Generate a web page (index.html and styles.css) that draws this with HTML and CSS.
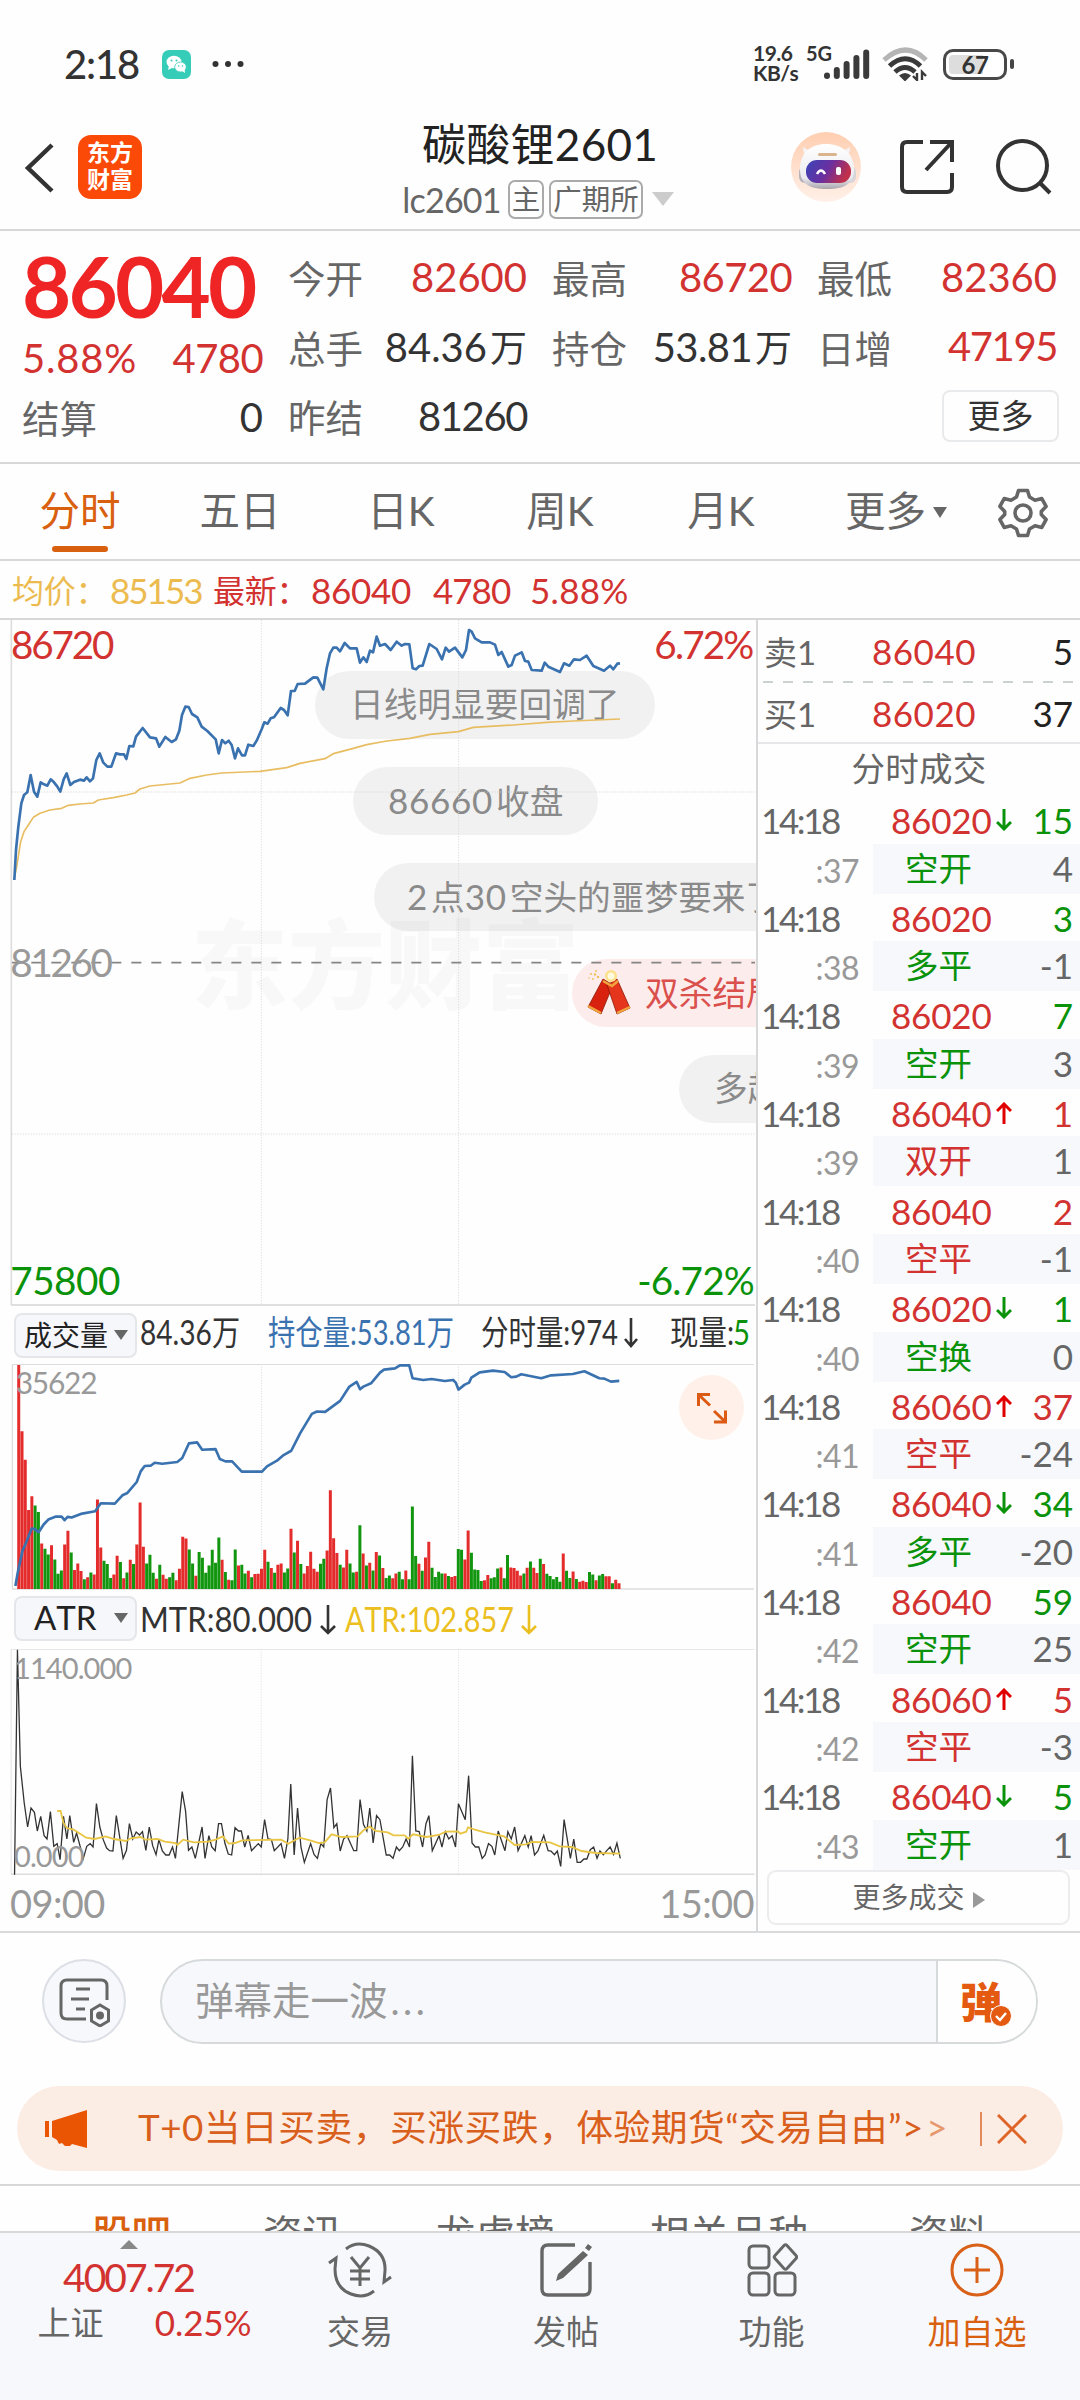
FILE: index.html
```html
<!DOCTYPE html>
<html lang="zh-CN">
<head>
<meta charset="utf-8">
<title>碳酸锂2601</title>
<link rel="stylesheet" href="styles.css">
</head>
<body>
<div class="app">
  <div class="status">
    <span class="clock">2:18</span>
    <svg class="wechat" width="29" height="29" viewBox="0 0 29 29"><rect width="29" height="29" rx="7" fill="#36cdb8"/><ellipse cx="12" cy="12" rx="7.5" ry="6.3" fill="#fff"/><path d="M7 16l-1 4 4-2z" fill="#fff"/><ellipse cx="18.5" cy="17" rx="5.8" ry="5" fill="#fff" stroke="#36cdb8" stroke-width=".8"/><path d="M20 21l3 2-.5-4z" fill="#fff"/><g fill="#36cdb8"><circle cx="9.5" cy="10.500" r="1"/><circle cx="14.500" cy="10.500" r="1"/><circle cx="16.700" cy="16" r=".8"/><circle cx="20.500" cy="16" r=".8"/></g></svg>
    <svg class="dots" width="32" height="8" viewBox="0 0 32 8" fill="#333"><circle cx="3.500" cy="4" r="3"/><circle cx="16" cy="4" r="3"/><circle cx="28.500" cy="4" r="3"/></svg>
    <div class="rate"><span>19.6</span><span>KB/s</span></div>
    <span class="net">5G</span>
    <svg class="signal" width="46" height="30" viewBox="0 0 46 30" stroke="#3a3a3a" stroke-width="6" stroke-linecap="round"><path d="M3 26.500v.5M12.800 21v6M22.600 15v12M32.400 9v18M42.200 3.500v23.500"/></svg>
    <svg class="wifi" width="48" height="34" viewBox="0 0 48 34" fill="none" stroke="#3a3a3a" stroke-width="5"><path d="M2 13q22-20 42 0" stroke="#b5b5b5"/><path d="M7.500 19q16-14.500 31 0"/><path d="M13 25q10-9 20 0"/><path d="M17 28.500q6-5 12 0l-6 6z" fill="#3a3a3a" stroke="none"/><path d="M35 26v7l-4-4M40 33v-8l4 4" stroke-width="2.400"/></svg>
    <div class="battery"><b>67</b></div><i class="nub"></i>
  </div>

  <header class="head">
    <svg class="back" width="30" height="50" viewBox="0 0 30 50" fill="none" stroke="#333" stroke-width="4.500"><path d="M28 2L4 25l24 23"/></svg>
    <div class="logo"><span>东方</span><span>财富</span></div>
    <div class="title">
      <h1>碳酸锂2601</h1>
      <div class="sub"><span class="code">lc2601</span><span class="tag">主</span><span class="tag">广期所</span><i class="tri"></i></div>
    </div>
    <svg class="robot" width="70" height="70" viewBox="0 0 70 70">
      <defs><linearGradient id="peach" x2="0" y2="1"><stop stop-color="#ffceb0"/><stop offset="1" stop-color="#fff0e8"/></linearGradient><linearGradient id="visor" x2="1" y2=".3"><stop stop-color="#3a45b8"/><stop offset=".55" stop-color="#6a2fa0"/><stop offset="1" stop-color="#c0304c"/></linearGradient><linearGradient id="shell" x2="0" y2="1"><stop stop-color="#fff"/><stop offset=".75" stop-color="#ececf0"/><stop offset="1" stop-color="#a9a4ac"/></linearGradient></defs>
      <circle cx="35" cy="35" r="35" fill="url(#peach)"/>
      <rect x="8" y="34" width="12" height="17" rx="6" fill="#b6b2bb"/><rect x="53" y="34" width="12" height="17" rx="6" fill="#d7d4da"/>
      <path d="M12 15q0 9 6 12l4-6zM59 15q0 9-6 12l-4-6z" fill="#f4f3f5"/>
      <path d="M35 12c16 0 28 10 28 25S53 57 36 57 9 52 9 37s10-25 26-25z" fill="url(#shell)"/>
      <rect x="27" y="21" width="19" height="3" rx="1.500" fill="#d9b48c"/>
      <rect x="15" y="28" width="45" height="23" rx="11" fill="url(#visor)"/>
      <path d="M26 42q4-7 8 0" fill="none" stroke="#fff" stroke-width="2.500"/><rect x="45" y="35" width="5" height="8" rx="2" fill="#fff"/>
    </svg>
    <svg class="share" width="54" height="56" viewBox="0 0 54 56" fill="none" stroke="#333" stroke-width="4"><path d="M23 3H7Q2 3 2 8v40q0 5 5 5h40q5 0 5-5V34M30 3h22v20M52 3L26 31"/></svg>
    <svg class="search" width="56" height="56" viewBox="0 0 56 56" fill="none" stroke="#333" stroke-width="4"><circle cx="26.500" cy="26.500" r="24.500"/><path d="M43 43l11 11"/></svg>
  </header>

  <section class="quote">
    <div class="qmain">
      <div class="last">86040</div>
      <div class="pair red"><span>5.88%</span><span class="tight">4780</span></div>
      <div class="pair settle"><em>结算</em><span>0</span></div>
    </div>
    <div class="qgrid">
      <div class="pair"><em>今开</em><span class="red">82600</span></div>
      <div class="pair"><em>最高</em><span class="red tight">86720</span></div>
      <div class="pair"><em>最低</em><span class="red">82360</span></div>
      <div class="pair"><em>总手</em><span>84.36<u>万</u></span></div>
      <div class="pair"><em>持仓</em><span class="tight">53.81<u>万</u></span></div>
      <div class="pair"><em>日增</em><span class="red tighter">47195</span></div>
      <div class="pair"><em>昨结</em><span class="tighter">81260</span></div>
      <div></div>
      <div class="morecell"><span class="morebtn">更多</span></div>
    </div>
  </section>

  <nav class="tabs">
    <span class="on">分时</span><span>五日</span><span>日K</span><span>周K</span><span>月K</span><span class="tmore">更多<i></i></span>
    <svg width="50" height="50" viewBox="0 0 50 50" fill="none" stroke="#666" stroke-width="3.600" stroke-linejoin="round"><path d="M20.500 2.500h9l2 6.500 5.500 3.200 6.800-1.600 4.300 7.800-4.800 5v3.200l4.800 5-4.300 7.800-6.800-1.600-5.500 3.200-2 6.500h-9l-2-6.500-5.500-3.200-6.800 1.600-4.300-7.800 4.800-5v-3.200l-4.800-5 4.300-7.800 6.800 1.600L18.500 9z"/><circle cx="25" cy="25" r="8"/></svg>
  </nav>

  <div class="avg"><span class="gold">均价：</span><span class="gold a1">85153</span><span class="a2">最新：</span><span class="a3">86040</span><span class="a4">4780</span><span class="a5">5.88%</span></div>

  <main class="body">
    <div class="left">
      <div class="price">
        <div class="mark">东方财富</div>
        <div class="pill p1">日线明显要回调了</div>
        <div class="pill p2"><b>86660</b>收盘</div>
        <div class="pill p3"><b>2</b>点<b>30</b>空头的噩梦要来了</div>
        <div class="pill hot p4"><svg width="46" height="48" viewBox="0 0 46 48"><g fill="#f0c05a"><circle cx="5" cy="5" r="1"/><circle cx="10" cy="2" r=".9"/><circle cx="12" cy="8" r="1.200"/><circle cx="7" cy="10" r=".9"/><circle cx="3" cy="9" r=".8"/><circle cx="9" cy="5.500" r="1.200"/></g><g stroke="#8a1a08" stroke-width=".8"><path d="M17 10l10 6-12 29-13-7z" fill="#d8210f"/><path d="M31 10l-10 6 10 29 13-6z" fill="#e5351c"/></g><path d="M2 37l13 7M44 38l-13 6M17 12l9 5 6-5" stroke="#f0a63c" stroke-width="2.400" fill="none"/><circle cx="25" cy="7" r="6" fill="#ffe08a"/><circle cx="25" cy="7" r="3.500" fill="#fffbe0"/></svg>双杀结局</div>
        <div class="pill p5">多起来</div>
        <svg class="plot" viewBox="0 30 2268 2058" fill="none">
          <g stroke="#d5d5d5" stroke-width="3" stroke-dasharray="3 5"><path d="M784 30V2085M1376 30V2085M36 546H2265M36 1572H2265"/></g>
          <path d="M34 30V2085" stroke="#ddd" stroke-width="5"/><path d="M34 2085H2265" stroke="#d4d4d4" stroke-width="5"/>
          <path d="M36 1058H2265" stroke="#858585" stroke-width="5" stroke-dasharray="30 30" stroke-dashoffset="2"/>
          <polyline stroke="#e8bd62" stroke-width="5" stroke-linejoin="round" points="43,805 50,770 62,695 72,665 85,645 100,622 120,610 150,600 185,595 205,586 240,582 280,579 295,570 340,563 380,555 405,549 420,537 450,528 540,519 570,505 620,495 665,489 780,484 860,473 900,460 975,446 1000,431 1060,415 1100,404 1160,393 1230,385 1290,373 1375,365 1420,352 1540,345 1640,337 1720,333 1860,327"/>
          <polyline stroke="#3a72b0" stroke-width="8" stroke-linejoin="round" points="43,810 48,720 55,650 64,580 72,555 82,547 92,495 102,545 112,560 122,517 132,523 142,527 152,508 162,517 172,530 181,545 191,508 200,490 211,525 222,516 240,509 252,512 260,502 270,514 279,505 289,450 299,430 310,458 322,470 334,470 348,430 360,433 372,433 379,447 388,408 400,409 408,380 428,354 450,382 468,385 478,410 496,381 515,396 528,388 538,362 546,315 556,290 566,291 576,312 592,322 605,350 622,363 647,388 656,430 666,390 676,400 686,392 695,405 705,445 714,415 726,436 735,436 745,404 760,408 770,392 785,358 793,337 803,341 812,325 822,322 842,294 852,300 863,316 873,243 884,243 893,222 915,221 940,202 952,203 970,238 980,175 990,130 1000,113 1010,113 1020,124 1034,99 1050,115 1070,115 1080,158 1090,142 1100,156 1110,122 1119,127 1130,80 1140,107 1155,102 1172,120 1190,95 1205,107 1215,102 1228,103 1238,175 1248,178 1258,168 1268,167 1288,102 1310,117 1326,148 1337,113 1347,125 1365,113 1387,142 1398,120 1407,60 1415,65 1425,85 1445,97 1470,97 1485,104 1495,135 1505,126 1525,170 1535,165 1545,137 1565,127 1575,153 1585,155 1595,180 1625,182 1634,158 1645,170 1680,186 1692,160 1708,167 1722,148 1740,150 1760,137 1780,168 1812,182 1830,167 1840,178 1852,161 1860,160"/>
          <g class="lab">
            <text x="33" y="148" fill="#d23230" textLength="310">86720</text>
            <text x="1963" y="148" fill="#d23230" textLength="300">6.72%</text>
            <text x="31" y="1102" fill="#999" textLength="308">81260</text>
            <text x="31" y="2056" fill="#0b920b" textLength="330">75800</text>
            <text x="1912" y="2056" fill="#0b920b" textLength="352">-6.72%</text>
          </g>
        </svg>
      </div>
      <div class="ind ind1">
        <span class="pick">成交量<i></i></span>
        <svg class="indtext" width="619" height="58" viewBox="0 0 619 58">
          <text x="3" y="40" textLength="100" lengthAdjust="spacingAndGlyphs">84.36万</text>
          <text x="131" y="40" fill="#3a72b0" textLength="186" lengthAdjust="spacingAndGlyphs">持仓量:53.81万</text>
          <text x="344" y="40" textLength="137" lengthAdjust="spacingAndGlyphs">分时量:974</text>
          <path d="M494 13v27M488 34l6 7 6-7" fill="none" stroke="#333" stroke-width="2.600"/>
          <text x="533" y="40" textLength="64" lengthAdjust="spacingAndGlyphs">现量:</text><text x="596" y="40" fill="#0b920b" textLength="17" lengthAdjust="spacingAndGlyphs">5</text>
        </svg>
      </div>
      <div class="vol">
        <svg class="plot" viewBox="0 222 2268 680" fill="none">
          <g stroke="#d5d5d5" stroke-width="3" stroke-dasharray="3 5"><path d="M784 222V899M1376 222V899"/></g>
          <path d="M34 223H2265M34 899H2265M34 223V899" stroke="#ddd" stroke-width="4"/>
          <g id="bars"></g>
          <text class="slab" x="44" y="312" textLength="246">35622</text>
          <polyline stroke="#3a72b0" stroke-width="8" stroke-linejoin="round" points="43,890 50,850 64,785 75,760 92,717 100,718 113,728 128,705 142,690 165,681 182,681 191,692 200,682 212,684 240,673 283,665 300,641 342,642 365,617 380,610 408,577 420,545 432,529 450,528 462,519 485,522 530,517 545,505 565,461 590,458 605,480 645,478 658,508 675,515 695,515 724,546 785,546 800,530 830,513 850,496 873,483 900,430 935,372 950,365 975,366 1020,333 1048,290 1070,276 1080,298 1090,290 1113,280 1140,248 1152,239 1185,235 1200,226 1228,226 1238,265 1270,270 1295,267 1335,273 1360,270 1368,278 1376,299 1395,284 1408,278 1415,263 1440,247 1480,242 1515,246 1535,262 1550,260 1565,253 1625,265 1655,256 1720,252 1755,244 1800,265 1815,266 1835,275 1860,273"/>
        </svg>
        <div class="expand"><svg width="32" height="32" viewBox="0 0 32 32" fill="none" stroke="#dd5a14" stroke-width="3"><path d="M14 2.500H2.500V14M3 3l11 10.500M18 30h11.500V18.500M29 29.500L18 19"/></svg></div>
      </div>
      <div class="ind">
        <span class="pick atr">ATR<i></i></span>
        <svg class="indtext" width="619" height="58" viewBox="0 0 619 58">
          <text x="3" y="42" textLength="172" lengthAdjust="spacingAndGlyphs">MTR:80.000</text>
          <path d="M191 15v27M184 36l7 7 7-7" fill="none" stroke="#333" stroke-width="2.600"/>
          <g fill="#ecbf20"><text x="208" y="42" textLength="169" lengthAdjust="spacingAndGlyphs">ATR:102.857</text></g>
          <path d="M392 15v27M385 36l7 7 7-7" fill="none" stroke="#ecbf20" stroke-width="2.600"/>
        </svg>
      </div>
      <div class="atrbox">
        <svg class="plot" viewBox="0 178 1560 678" preserveAspectRatio="none" fill="none">
          <g stroke="#d5d5d5" stroke-width="2" stroke-dasharray="3 5"><path d="M539 178V855M946 178V855"/></g>
          <path d="M23 179V854M23 179H1557" stroke="#ddd" stroke-width="2"/><path d="M23 854H1557" stroke="#ddd" stroke-width="5"/>
          <polyline stroke="#333" stroke-width="1.300" vector-effect="non-scaling-stroke" points="30,855 36,180 42,530 50,640 57,712 64,655 71,668 77,724 84,680 91,738 97,748 104,666 111,770 118,762 124,810 131,680 138,748 144,678 152,758 158,730 172,806 179,770 186,762 192,772 199,642 206,712 213,750 220,775 226,783 233,784 240,678 254,806 261,782 267,702 274,748 281,727 288,736 294,726 301,782 308,712 315,768 322,795 328,750 335,784 342,796 349,796 356,772 362,806 376,606 383,665 389,782 396,772 403,806 417,712 423,806 431,738 437,772 444,783 451,702 457,702 464,760 471,793 478,796 485,714 492,724 498,724 505,772 512,737 519,783 533,762 539,772 546,690 553,748 560,750 566,783 580,762 587,806 594,748 600,583 607,796 614,655 621,772 628,818 641,762 648,794 655,806 662,762 668,772 675,630 682,595 689,714 695,702 702,784 709,748 716,738 730,783 736,783 743,630 750,704 757,724 763,655 770,760 777,678 784,690 797,796 804,796 811,806 818,772 824,783 831,772 838,748 845,772 851,498 858,724 865,726 872,772 879,702 885,678 892,783 906,738 912,772 919,726 926,748 933,738 940,772 946,642 960,690 967,558 974,760 981,772 988,772 995,806 1001,796 1008,762 1015,770 1021,796 1028,724 1042,783 1048,726 1055,748 1062,712 1069,783 1083,738 1090,772 1096,738 1103,796 1110,784 1122,737 1131,783 1137,784 1144,795 1150,784 1157,830 1164,690 1177,806 1184,748 1191,818 1198,818 1205,808 1211,808 1218,780 1225,772 1232,806 1238,784 1245,795 1252,783 1259,772 1266,794 1273,760 1280,806"/>
          <polyline stroke="#e9c544" stroke-width="1.800" vector-effect="non-scaling-stroke" points="118,664 125,664 131,700 138,715 152,720 178,744 195,748 218,740 235,748 260,754 270,746 290,742 300,750 325,748 340,756 362,760 366,766 378,750 400,758 430,756 445,750 460,740 472,762 485,760 500,752 580,750 595,762 605,754 618,744 640,752 658,760 670,758 684,734 705,742 738,740 750,722 763,711 775,724 800,728 812,737 835,737 843,747 852,734 880,742 905,736 920,726 945,725 950,732 962,726 966,713 980,720 1000,728 1040,740 1062,766 1085,764 1098,757 1135,758 1155,770 1180,772 1200,784 1230,790 1280,792"/>
        </svg>
        <span class="atrmax">1140.000</span><span class="atrmin">0.000</span>
      </div>
      <div class="times"><span>09:00</span><span>15:00</span></div>
    </div>

    <aside class="right">
      <div class="book sell"><em>卖1</em><b>86040</b><span>5</span></div>
      <svg class="dash" width="310" height="2" viewBox="0 0 310 2"><path d="M0 1h310" stroke="#ccd2d2" stroke-width="2" stroke-dasharray="10 10"/></svg>
      <div class="book buy"><em>买1</em><b>86020</b><span>37</span></div>
      <h2>分时成交</h2>
      <div class="ticks" id="ticks"></div>
      <div class="allticks">更多成交<i></i></div>
    </aside>
  </main>

  <div class="compose">
    <div class="setting"><svg width="52" height="52" viewBox="0 0 52 52" fill="none" stroke="#666" stroke-width="3"><path d="M28 44H9q-6 0-6-6V11q0-6 6-6h34q6 0 6 6v14"/><path d="M18 14h14M13 24h18M18 34h9"/><path d="M42 30l8.500 5v11L42 51l-8.500-5V35z" fill="#f6f8fb"/><circle cx="42" cy="40.500" r="2.500" fill="#666"/></svg></div>
    <div class="input"><span class="hint">弹幕走一波<b>...</b></span><div class="dan"><span>弹</span><svg width="22" height="22" viewBox="-1 -1 22 22"><circle cx="10" cy="10" r="10.500" fill="#e45a10" stroke="#fefefe"/><path d="M5 10l4 4 6-7" fill="none" stroke="#fff" stroke-width="2.400"/></svg></div></div>
  </div>

  <div class="banner">
    <svg width="44" height="38" viewBox="0 0 44 38" fill="#ea5504"><path d="M1 11h4v16H1zM8 11L43 0v38l-15-4-2 2h-5l-3-3-3 1-2-4-5-3z"/></svg>
    <span class="btext">T+0当日买卖，买涨买跌，体验期货“交易自由”<b>&gt;</b><b class="fade">&gt;</b></span>
    <i class="bar"></i>
    <svg class="x" width="30" height="30" viewBox="0 0 30 30" stroke="#df6428" stroke-width="3"><path d="M1 1l28 28M29 1L1 29"/></svg>
  </div>

  <div class="feed"><span class="f1">股吧</span><span class="f2">资讯</span><span class="f3">龙虎榜</span><span class="f4">相关品种</span><span class="f5">资料</span></div>

  <footer class="nav">
    <div class="index"><i></i><span class="pt">4007.72</span><div><em>上证</em><span>0.25%</span></div></div>
    <div class="item"><svg width="64" height="56" viewBox="0 0 64 56" fill="none" stroke="#666" stroke-width="3"><path d="M18 7q10-8 23-3 17 7 16 25l-1 11 7-5M46 49q-10 8-23 3Q7 46 7 27l1-11-7 5"/><path d="M23 15l9 11 9-11M32 26v18M22 29h20M22 37h20"/></svg>交易</div>
    <div class="item"><svg width="54" height="56" viewBox="0 0 54 56" fill="none" stroke="#666" stroke-width="3.400"><path d="M36 3H9Q3 3 3 9v38q0 6 6 6h36q6 0 6-6V20"/><path d="M44 9l5 4-25 23-7 3 2-7zM46 6l3-4 4 3-3 4z" fill="#666" stroke="none"/></svg>发帖</div>
    <div class="item"><svg width="52" height="54" viewBox="0 0 52 54" fill="none" stroke="#666" stroke-width="3"><rect x="3" y="3" width="20" height="22" rx="4"/><rect x="3" y="30" width="20" height="22" rx="4"/><rect x="29" y="30" width="20" height="22" rx="4"/><path d="M38 2.500q1.500-1.500 3 0l9 10q1.500 1.500 0 3l-9 10q-1.500 1.500-3 0l-9-10q-1.500-1.500 0-3z"/></svg>功能</div>
    <div class="item add"><svg width="54" height="54" viewBox="0 0 54 54" fill="none" stroke="#d96018" stroke-width="3"><circle cx="27" cy="27" r="25"/><path d="M27 14v26M14 27h26"/></svg>加自选</div>
  </footer>
</div>
<script src="app.js"></script>
</body>
</html>
```
FILE: styles.css
```css
* { box-sizing: border-box; }
body { margin: 0; background: #fefefe; color: #333; font-family: Lato, "Noto Sans CJK SC", sans-serif; font-kerning: none; }
em, i, u { font-style: normal; text-decoration: none; }
h1, h2 { margin: 0; font-weight: 400; }
.app { width: 1080px; height: 2400px; overflow: hidden; display: flex; flex-direction: column; }
.app > * { flex: none; }
.red { color: #d23230; }

.status { height: 98px; padding: 30px 0 0 64px; display: flex; align-items: center; }
.clock { width: 98px; font-size: 40px; line-height: 68px; letter-spacing: -1.2px; font-weight: 500; }
.dots { margin-left: 21px; }
.rate { margin-left: 509px; width: 53px; display: flex; flex-direction: column; font-size: 21px; line-height: 20px; font-weight: 700; letter-spacing: -.5px; margin-top: -2px; }
.net { width: 30px; font-size: 20px; font-weight: 700; line-height: 20px; margin-bottom: 22px; letter-spacing: 0; }
.signal { margin-left: -12px; }
.wifi { margin-left: 12px; }
.battery { margin-left: 13px; width: 64px; height: 31px; border: 3px solid #484848; border-radius: 10px; background: linear-gradient(90deg, #ddd 64%, #fff 64%); background-clip: content-box; padding: 3px; display: flex; align-items: center; justify-content: center; }
.battery b { font-size: 24px; letter-spacing: -.5px; }
.nub { width: 4px; height: 10px; margin-left: 3px; border-radius: 2px; background: #444; }

.head { height: 133px; border-bottom: 2px solid #d8d8d8; display: flex; align-items: flex-start; padding-left: 24px; }
.back { margin-top: 45px; }
.logo { margin: 37px 0 0 24px; width: 64px; height: 64px; border-radius: 13px; background: #fb4a08; color: #fff; font-size: 23px; line-height: 27px; font-weight: 700; padding-top: 4px; display: flex; flex-direction: column; align-items: center; }
.title { width: 398px; margin-left: 199px; display: flex; flex-direction: column; align-items: center; }
.title h1 { height: 73px; line-height: 92px; font-size: 44px; letter-spacing: .3px; color: #222; }
.sub { display: flex; align-items: center; height: 56px; color: #666; margin-left: -4px; }
.code { font-size: 34px; letter-spacing: -.8px; margin-right: 7px; }
.tag { border: 2px solid #aaa; border-radius: 7px; height: 39px; line-height: 35px; font-size: 28.500px; padding: 0 2px; margin-right: 5px; }
.tri { border: 11px solid transparent; border-top: 14px solid #ccc; border-bottom: 0; margin-left: 4px; }
.robot { margin: 34px 0 0 52px; }
.share { margin: 41px 0 0 39px; }
.search { margin: 41px 0 0 42px; }

.quote { height: 233px; border-bottom: 2px solid #d8d8d8; display: flex; padding: 0 23px 0 22px; }
.qmain { width: 241px; }
.last { height: 92px; line-height: 109px; font-size: 85px; font-weight: 700; color: #ef2525; letter-spacing: -2.8px; }
.pair { display: flex; justify-content: space-between; align-items: center; height: 69.500px; font-size: 40px; white-space: nowrap; }
.pair em { font-size: 37.500px; color: #666; }
.pair u { font-size: 37px; margin-left: 3px; letter-spacing: 0; }
.tight { letter-spacing: -.6px; }
.tighter { letter-spacing: -1.4px; }
.qmain .red { height: 69px; }
.qmain .settle { height: 49px; }
.qmain .red span:first-child { letter-spacing: .8px; }
.qgrid { margin: 11px 0 0 25px; display: grid; grid-template-columns: 239px 240px 240px; column-gap: 25px; align-content: start; }
.morecell { display: flex; justify-content: flex-end; align-items: center; margin-right: -2px; }
.morebtn { width: 117px; height: 52px; border: 2px solid #e8eaec; border-radius: 8px; text-align: center; line-height: 46px; font-size: 33px; }

.tabs { height: 97px; border-bottom: 2px solid #d8d8d8; display: grid; grid-template-columns: 160px 160px 162px 156px 166px 195px 50px; font-size: 40.500px; line-height: 94px; color: #666; text-align: center; }
.tabs .on { color: #d9600f; position: relative; }
.tabs .on::after { content: ""; position: absolute; left: 52px; bottom: 7px; width: 56px; height: 6px; border-radius: 3px; background: #d9600f; }
.tmore { padding-right: 11px; }
.tmore i { display: inline-block; vertical-align: 8px; border: 7px solid transparent; border-top: 11px solid #666; border-bottom: 0; margin-left: 7px; }
.tabs svg { margin-top: 24px; margin-left: -1px; }

.avg { height: 59px; line-height: 59px; border-bottom: 2px solid #d8d8d8; display: flex; padding-left: 12px; font-size: 35px; color: #d23230; white-space: nowrap; letter-spacing: -.3px; }
.avg .gold { color: #ecbb50; }
.gold:first-child, .a2 { font-size: 32px; width: 98px; }
.avg .a1 { width: 103px; letter-spacing: -2px; }
.a3 { width: 122px; }
.a4 { width: 97px; letter-spacing: -1px; }
.a5 { letter-spacing: .3px; }

.body { height: 1313px; display: flex; border-bottom: 2px solid #d8dadb; }
.left { width: 758px; border-right: 2px solid #d6d8d9; overflow: hidden; }
.price { position: relative; height: 686px; overflow: hidden; }
.plot { position: absolute; left: 0; top: 0; width: 756px; height: 100%; }
.mark { position: absolute; left: 191px; top: 274px; font-size: 97px; line-height: 140px; font-weight: 900; color: rgba(0,0,0,.025); }
.pill { position: absolute; height: 68px; border-radius: 34px; background: rgba(0,0,0,.05); color: #8a8a8a; font-size: 33.700px; line-height: 67px; padding: 0 35px; white-space: nowrap; }
.pill b { font-weight: 400; font-size: 35px; letter-spacing: .7px; margin-right: 3px; }
.p1 { left: 315px; top: 51px; }
.p2 { left: 353px; top: 147px; width: 245px; }
.p3 { left: 374px; top: 243px; padding-left: 33px; }
.p4 { left: 572px; top: 339px; }
.p5 { left: 679px; top: 435px; }
.hot { background: #fdecec; color: #d9504c; padding-left: 14px; display: flex; align-items: center; gap: 13px; }
.lab text { font-size: 116px; }
.slab { font-size: 90px; fill: #999; }
.ind { height: 59px; display: flex; align-items: center; padding-left: 14px; }
.ind1 { height: 58px; }
.pick { width: 123px; height: 45px; border: 2px solid #e4e6ea; border-radius: 8px; background: #f6f7fa; display: flex; align-items: center; justify-content: space-between; padding: 0 7px 3px 8px; font-size: 28px; color: #222; }
.pick i { border: 7px solid transparent; border-top: 10px solid #666; border-bottom: 0; margin-top: 2px; }
.atr { font-size: 33px; padding-left: 18px; margin-top: -2px; }
.indtext text { font-size: 34px; }
.indtext { fill: #333; margin-top: -2px; }
.vol, .atrbox { position: relative; height: 226px; }
.expand { position: absolute; left: 679px; top: 11px; width: 65px; height: 65px; border-radius: 50%; background: #fff1e9; display: flex; align-items: center; justify-content: center; }
.atrmax, .atrmin { position: absolute; left: 14px; font-size: 29px; line-height: 36px; color: #999; letter-spacing: -.9px; }
.atrmax { top: 1px; }
.atrmin { bottom: 1px; }
.times { height: 56px; padding: 0 2px 0 10px; line-height: 57px; display: flex; justify-content: space-between; font-size: 38px; color: #999; letter-spacing: -.6px; }

.right { flex: 1; position: relative; }
.book { height: 61px; display: flex; align-items: center; padding: 0 7px 0 6px; font-size: 35px; color: #222; }
.book em { width: 108px; font-size: 33px; color: #666; }
.book b { font-weight: 400; color: #d23230; letter-spacing: .5px; }
.book span { margin-left: auto; }
.buy { border-bottom: 2px solid #e6e6e8; }
.dash { display: block; margin-left: 5px; }
.right h2 { height: 52px; line-height: 49px; font-size: 33.500px; color: #666; text-align: center; letter-spacing: .3px; }
.tick { height: 97.600px; font-size: 35px; }
.t1 { height: 47.600px; padding-top: 1px; display: flex; align-items: center; padding-right: 7px; padding-left: 3px; }
.t1 em { width: 130px; color: #666; letter-spacing: -2.400px; }
.t1 b { font-weight: 400; color: #d23230; letter-spacing: -.2px; }
.t1 svg { margin-left: 4px; }
.t1 span, .t2 span { margin-left: auto; }
.t2 { height: 50px; display: flex; line-height: 49px; }
.t2 em { width: 101px; text-align: right; color: #999; font-size: 32px; line-height: 54px; letter-spacing: -.5px; }
.t2 div { width: 207px; margin-left: 14px; padding: 0 7px 0 32px; background: #f6f8fb; display: flex; }
.t2 b { font-weight: 400; font-size: 33.500px; }
.t2 span { color: #666; }
.t1 .up, .t2 .up { color: #d23230; }
.t1 .down, .t2 .down { color: #0b920b; }
.allticks { margin: 0 10px 0 9px; height: 55px; border: 2px solid #ececee; border-radius: 9px; text-align: center; line-height: 51px; font-size: 28px; color: #666; }
.allticks i { display: inline-block; border: 8px solid transparent; border-left: 12px solid #999; border-right: 0; margin-left: 8px; }

.compose { height: 153px; padding: 26px 0 0 42px; display: flex; }
.setting { width: 84px; height: 84px; border-radius: 50%; border: 2px solid #dcdfe6; background: #f6f8fb; display: flex; align-items: center; justify-content: center; }
.input { margin-left: 34px; width: 878px; height: 85px; border: 2px solid #d6dada; border-radius: 43px; overflow: hidden; background: #f6f8fb; display: flex; }
.hint { flex: 1; padding-left: 33px; line-height: 79px; font-size: 38.500px; color: #999; }
.hint b { font-weight: 400; letter-spacing: 3.500px; margin-left: 3px; }
.dan { width: 100px; border-left: 2px solid #d6dada; background: #fefefe; display: flex; align-items: center; padding-left: 22px; }
.dan span { font-size: 42px; line-height: 78px; font-weight: 900; color: #e45a10; }
.dan svg { flex: none; margin: 28px 0 0 -12px; position: relative; }

.banner { margin: 0 17px; height: 85px; border-radius: 43px; background: #fcede4; display: flex; align-items: center; padding-left: 27px; color: #d95f1c; }
.btext { margin-left: 50px; width: 842px; font-size: 36.800px; letter-spacing: .45px; line-height: 77px; padding-bottom: 3px; white-space: nowrap; }
.btext b { font-weight: 400; letter-spacing: 3px; }
.fade { opacity: .6; }
.bar { width: 2px; height: 34px; background: #e28a5c; }
.x { margin-left: 15px; }

.feed { margin-top: 13px; height: 47px; overflow: hidden; border-top: 2px solid #d8d8d8; display: flex; padding-left: 92px; font-size: 39.500px; line-height: 96px; color: #666; white-space: nowrap; }
.f1 { width: 171px; color: #d9600f; font-weight: 500; }
.f2 { width: 173px; }
.f3 { width: 214px; }
.f4 { width: 259px; }
.nav { flex: 1; border-top: 2px solid #d8d8d8; background: #f6f8fb; display: grid; grid-template-columns: 257px 206px 206px 205px 206px; }
.index { display: flex; flex-direction: column; align-items: center; color: #d23230; }
.index i { border: 9px solid transparent; border-bottom: 9px solid #888; border-top: 0; margin-top: 7px; }
.pt { font-size: 39px; line-height: 56px; letter-spacing: -2px; }
.index div { width: 214px; display: flex; justify-content: space-between; margin-left: 32px; line-height: 34px; font-size: 35px; letter-spacing: -.1px; }
.index em { font-size: 33px; color: #666; }
.item { display: flex; flex-direction: column; align-items: center; font-size: 33px; line-height: 46px; color: #666; padding-top: 9px; }
.item svg { height: 56px; margin-bottom: 10px; flex: none; }
.add { color: #d9600f; }
```
FILE: app.js
```js
// Minute volume bars: direction followed by the bar's top in chart units.
const volume = 'r225 r424 r510 r661 r620 g648 g667 r762 g778 g795 r767 g810 g853 g843 r765 r724 g789 r842 r822 r845 g870 r864 g849 r855 r630 r774 g814 g824 g866 r855 r799 g818 r867 g849 r811 g824 r765 r639 r772 g822 g796 g850 r868 g826 r856 r868 g864 g850 r873 r838 r742 r747 g780 g822 r859 g788 g805 g850 g828 g781 g820 g744 r811 g848 r871 g873 g780 r828 g826 g852 r844 g864 r854 r853 r838 r781 g817 r836 g850 r826 r822 g849 g837 r718 g789 r754 g824 r852 r830 r787 r838 r847 g823 g808 r783 r602 r746 r791 g826 r834 r781 g822 g849 r847 g707 r792 g828 r820 g843 r788 g798 r836 g866 g858 r867 r852 g847 g870 r843 g870 g651 g800 r823 g844 r804 r757 g835 g863 g847 g852 r852 g860 r863 r860 g779 g781 r810 r723 g790 g840 g842 g875 r873 r857 g867 g864 g837 r834 g867 g797 r834 r836 r844 r858 g852 r835 g816 r835 r851 g808 r824 g853 g860 g870 g863 g877 r792 g844 g866 r846 g869 r877 r874 r878 g848 g855 r873 g858 g854 r861 r861 g882 r871 r882'.split(' ');
const paths = { r: '', g: '' };
volume.forEach((v, i) => { paths[v[0]] += `M${(53 + 9.87 * i).toFixed(1)} 899V${v.slice(1)}`; });
document.getElementById('bars').innerHTML =
  `<path d="${paths.r}" stroke="#e42c2c" stroke-width="9"/><path d="${paths.g}" stroke="#12950f" stroke-width="9"/>`;

// price, arrow, volume, side colour, seconds, kind, kind colour, open-interest change
const ticks = [
  [86020, 'down', 15, 'down', 37, '空开', 'down', 4],
  [86020, '', 3, 'down', 38, '多平', 'down', -1],
  [86020, '', 7, 'down', 39, '空开', 'down', 3],
  [86040, 'up', 1, 'up', 39, '双开', 'up', 1],
  [86040, '', 2, 'up', 40, '空平', 'up', -1],
  [86020, 'down', 1, 'down', 40, '空换', 'down', 0],
  [86060, 'up', 37, 'up', 41, '空平', 'up', -24],
  [86040, 'down', 34, 'down', 41, '多平', 'down', -20],
  [86040, '', 59, 'down', 42, '空开', 'down', 25],
  [86060, 'up', 5, 'up', 42, '空平', 'up', -3],
  [86040, 'down', 5, 'down', 43, '空开', 'down', 1],
];
const arrows = {
  up: '<svg width="16" height="22" viewBox="0 0 16 22" fill="none" stroke="#e00000" stroke-width="3"><path d="M8 22V2M1 9l7-7 7 7"/></svg>',
  down: '<svg width="16" height="22" viewBox="0 0 16 22" fill="none" stroke="#0b920b" stroke-width="3"><path d="M8 0v20M1 13l7 7 7-7"/></svg>',
  '': '',
};
document.getElementById('ticks').innerHTML = ticks.map(([p, a, v, vc, s, k, kc, d]) =>
  `<div class="tick"><div class="t1"><em>14:18</em><b>${p}</b>${arrows[a]}<span class="${vc}">${v}</span></div>` +
  `<div class="t2"><em>:${s}</em><div><b class="${kc}">${k}</b><span>${d}</span></div></div></div>`).join('');
```
